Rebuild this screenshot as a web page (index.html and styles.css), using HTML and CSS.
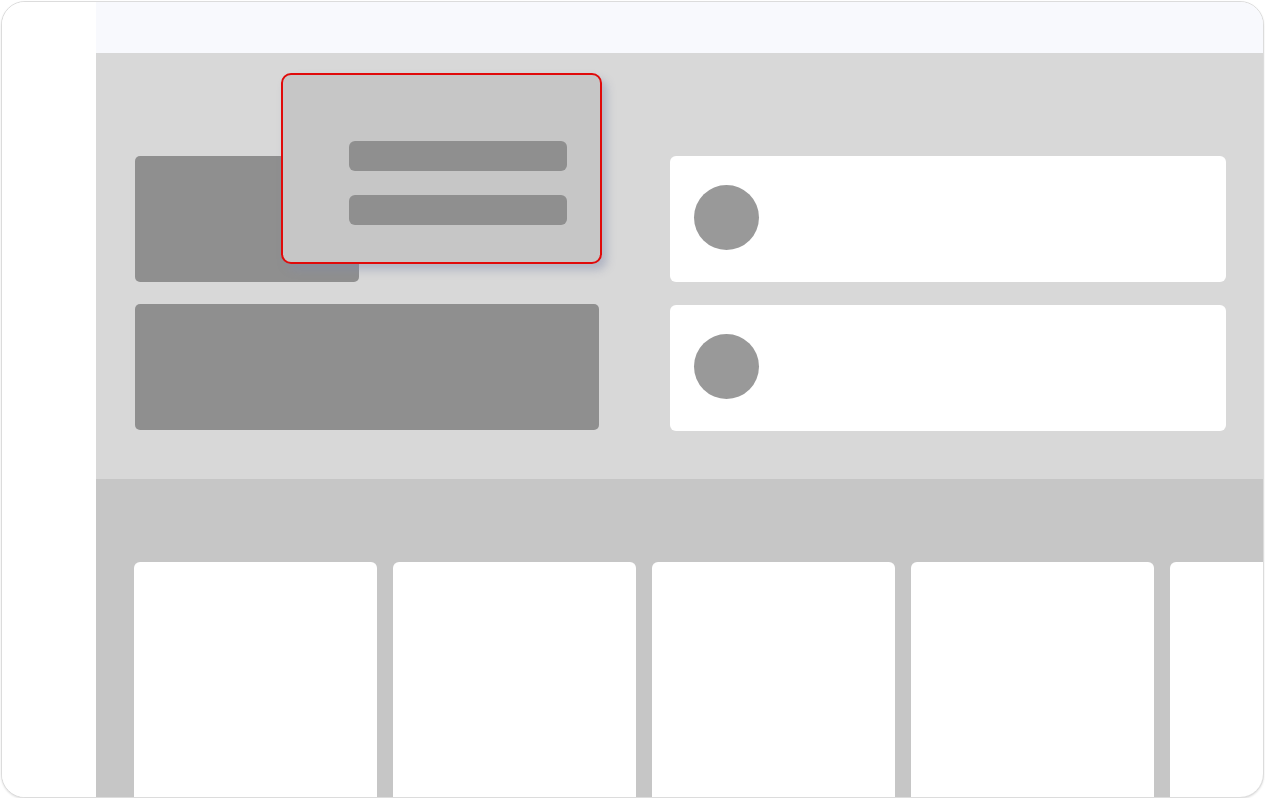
FILE: index.html
```html
<!DOCTYPE html>
<html>
<head>
<meta charset="utf-8">
<link rel="stylesheet" href="styles.css">
</head>
<body>
<div class="frame">
  <aside class="sidebar"></aside>
  <main class="main">
    <div class="topbar"></div>
    <section class="hero">
      <div class="left-col">
        <div class="block small"></div>
        <div class="block wide"></div>
      </div>
      <div class="right-col">
        <div class="item"><span class="avatar"></span></div>
        <div class="item"><span class="avatar"></span></div>
      </div>
    </section>
    <section class="cards">
      <div class="card"></div>
      <div class="card"></div>
      <div class="card"></div>
      <div class="card"></div>
      <div class="card"></div>
    </section>
  </main>
  <div class="popup">
    <div class="bar"></div>
    <div class="bar"></div>
  </div>
</div>
</body>
</html>
```

FILE: styles.css
```css
html, body {
  margin: 0;
  padding: 0;
  background: #ffffff;
}
.frame {
  position: relative;
  box-sizing: border-box;
  width: 1263px;
  height: 797px;
  margin: 1px 0 0 1px;
  border: 1px solid #dcdcdc;
  border-radius: 24px;
  overflow: hidden;
  display: flex;
  background: #ffffff;
  box-shadow: 0 1px 2px rgba(0,0,0,0.12);
}
.sidebar {
  width: 94px;
  flex: 0 0 94px;
  background: #ffffff;
}
.main {
  flex: 1;
  display: flex;
  flex-direction: column;
  min-width: 0;
}
.topbar {
  height: 51px;
  flex: 0 0 51px;
  background: #f8f9fd;
}
.hero {
  height: 426px;
  flex: 0 0 426px;
  background: #d8d8d8;
  box-sizing: border-box;
  padding: 103px 0 0 39px;
  display: flex;
  gap: 71px;
}
.left-col {
  width: 464px;
  display: flex;
  flex-direction: column;
  gap: 22px;
}
.block {
  background: #8f8f8f;
  border-radius: 5px;
  height: 126px;
}
.block.small { width: 224px; }
.block.wide { width: 464px; }
.right-col {
  width: 556px;
  display: flex;
  flex-direction: column;
  gap: 23px;
}
.item {
  height: 126px;
  box-sizing: border-box;
  background: #ffffff;
  border-radius: 6px;
  display: flex;
  align-items: flex-start;
  padding: 29px 0 0 24px;
}
.avatar {
  width: 65px;
  height: 65px;
  border-radius: 50%;
  background: #999999;
}
.cards {
  flex: 1;
  background: #c6c6c6;
  box-sizing: border-box;
  padding: 83px 0 0 38px;
  display: flex;
  gap: 16px;
  overflow: hidden;
}
.card {
  flex: 0 0 243px;
  background: #ffffff;
  border-radius: 6px 6px 0 0;
}
.popup {
  position: absolute;
  left: 279px;
  top: 71px;
  width: 321px;
  height: 191px;
  box-sizing: border-box;
  border: 2px solid #e00a0a;
  border-radius: 10px;
  background: #c6c6c6;
  box-shadow: 5px 6px 8px rgba(130, 140, 170, 0.45);
  padding: 66px 33px 0 66px;
  display: flex;
  flex-direction: column;
  gap: 24px;
}
.bar {
  height: 30px;
  background: #8f8f8f;
  border-radius: 6px;
}
```
